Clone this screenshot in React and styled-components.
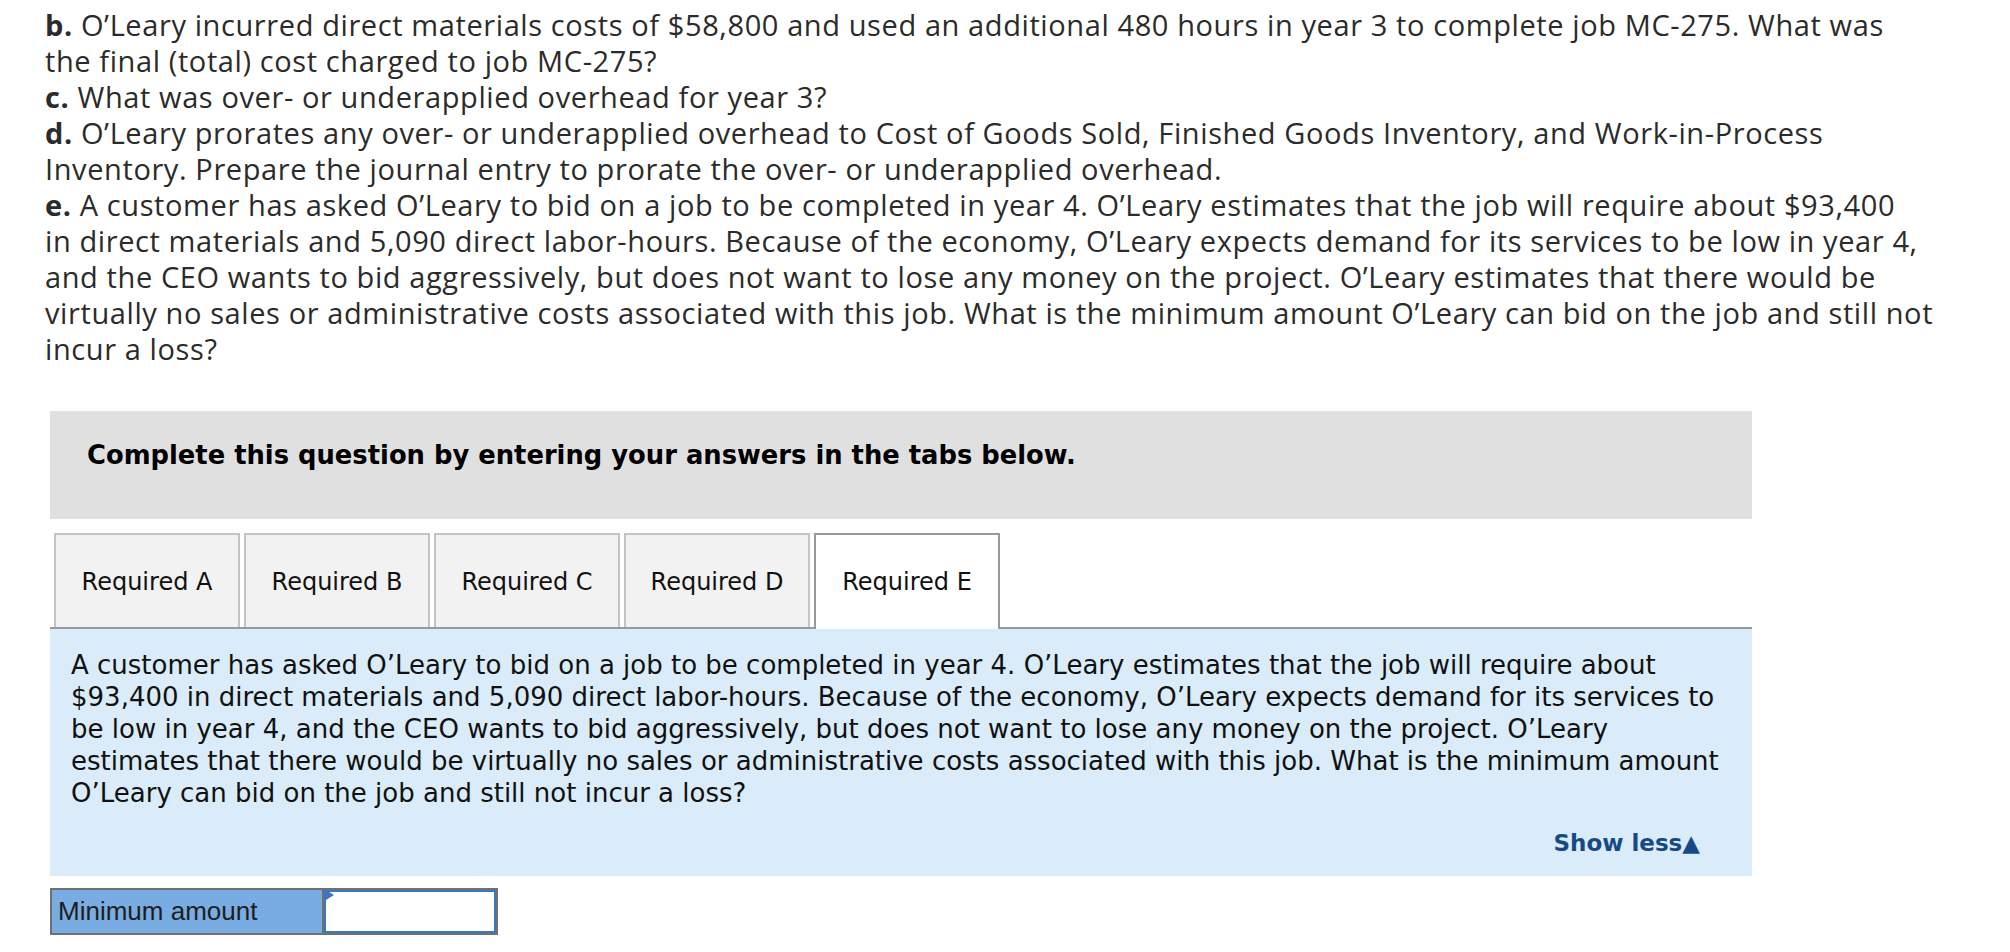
import React from 'react';
import styled, { createGlobalStyle } from 'styled-components';

const GlobalStyle = createGlobalStyle`
	html, body {
		margin: 0;
		padding: 0;
		background: #ffffff;
	}
`;

const Page = styled.div`
	padding: 7px 0 0 45px;
	width: 1965px;
	box-sizing: border-box;
`;

const Question = styled.div`
	font-family: 'Open Sans', Lato, 'Liberation Sans', sans-serif;
	font-size: 29px;
	letter-spacing: 0.6px;
	line-height: 36px;
	color: #2b2b2b;
	white-space: nowrap;
`;

const Part = styled.p`
	margin: 0;
`;

const Letter = styled.b`
	font-weight: 700;
`;

const Section = styled.div`
	margin: 44px 0 0 5px;
	width: 1702px;
`;

const Banner = styled.div`
	height: 108px;
	box-sizing: border-box;
	padding: 28px 0 0 37px;
	background: #e0e0e0;
	font-family: 'DejaVu Sans', Verdana, sans-serif;
	font-weight: 700;
	font-size: 25.8px;
	line-height: 32px;
	color: #000;
`;

const TabBar = styled.div`
	display: flex;
	gap: 4px;
	margin-top: 14px;
	padding-left: 4px;
	border-bottom: 2px solid #999999;
`;

const Tab = styled.div`
	width: 186px;
	box-sizing: border-box;
	display: flex;
	align-items: center;
	justify-content: center;
	border: 2px solid ${props => (props.active ? '#999999' : '#c4c4c4')};
	border-bottom: none;
	background: ${props => (props.active ? '#ffffff' : '#f2f2f2')};
	margin-bottom: ${props => (props.active ? '-2px' : '0')};
	height: ${props => (props.active ? '96px' : '94px')};
	padding-top: ${props => (props.active ? '0' : '2px')};
	font-family: 'DejaVu Sans', Verdana, sans-serif;
	font-size: 24px;
	color: #111;
`;

const Prompt = styled.div`
	background: #daecf9;
	padding: 20px 40px 17px 21px;
	font-family: 'DejaVu Sans', Verdana, sans-serif;
	font-size: 26px;
	line-height: 32px;
	color: #111;
`;

const PromptText = styled.p`
	margin: 0;
	white-space: nowrap;
`;

const ShowLess = styled.div`
	margin-top: 18px;
	padding-right: 12px;
	text-align: right;
	font-size: 23px;
	font-weight: 700;
	color: #154a87;
	cursor: pointer;
`;

const AnswerRow = styled.div`
	display: flex;
	margin-top: 12px;
	width: 448px;
	height: 47px;
	box-sizing: border-box;
	border: 2px solid #707070;
`;

const AnswerLabel = styled.div`
	width: 272px;
	display: flex;
	align-items: center;
	padding-left: 6px;
	box-sizing: border-box;
	background: #79ace2;
	border-right: 2px solid #707070;
	font-family: 'Liberation Sans', Arial, sans-serif;
	font-size: 26px;
	color: #1e1e1e;
`;

const AnswerField = styled.div`
	position: relative;
	flex: 1;
	border: 2px solid #3a78bb;
	background: #ffffff;
`;

const AnswerInput = styled.input`
	width: 100%;
	height: 100%;
	box-sizing: border-box;
	border: none;
	outline: none;
	background: transparent;
	font-family: 'Liberation Sans', Arial, sans-serif;
	font-size: 24px;
	padding: 0 8px;
`;

const Flag = styled.span`
	position: absolute;
	top: 0;
	left: 0;
	width: 0;
	height: 0;
	border-top: 5px solid transparent;
	border-bottom: 5px solid transparent;
	border-left: 8px solid #3a78bb;
	transform: translateY(-2px);
`;

const tabs = ['Required A', 'Required B', 'Required C', 'Required D', 'Required E'];

export default function App() {
	return (
		<>
			<GlobalStyle />
			<Page>
				<Question>
					<Part>
						<Letter>b.</Letter> O’Leary incurred direct materials costs of $58,800 and used an additional 480 hours in year 3 to complete job MC-275. What was
						<br />
						the final (total) cost charged to job MC-275?
					</Part>
					<Part>
						<Letter>c.</Letter> What was over- or underapplied overhead for year 3?
					</Part>
					<Part>
						<Letter>d.</Letter> O’Leary prorates any over- or underapplied overhead to Cost of Goods Sold, Finished Goods Inventory, and Work-in-Process
						<br />
						Inventory. Prepare the journal entry to prorate the over- or underapplied overhead.
					</Part>
					<Part>
						<Letter>e.</Letter> A customer has asked O’Leary to bid on a job to be completed in year 4. O’Leary estimates that the job will require about $93,400
						<br />
						in direct materials and 5,090 direct labor-hours. Because of the economy, O’Leary expects demand for its services to be low in year 4,
						<br />
						and the CEO wants to bid aggressively, but does not want to lose any money on the project. O’Leary estimates that there would be
						<br />
						virtually no sales or administrative costs associated with this job. What is the minimum amount O’Leary can bid on the job and still not
						<br />
						incur a loss?
					</Part>
				</Question>

				<Section>
					<Banner>Complete this question by entering your answers in the tabs below.</Banner>
					<TabBar>
						{tabs.map(label => (
							<Tab key={label} active={label === 'Required E'}>
								{label}
							</Tab>
						))}
					</TabBar>
					<Prompt>
						<PromptText>
							A customer has asked O’Leary to bid on a job to be completed in year 4. O’Leary estimates that the job will require about
							<br />
							$93,400 in direct materials and 5,090 direct labor-hours. Because of the economy, O’Leary expects demand for its services to
							<br />
							be low in year 4, and the CEO wants to bid aggressively, but does not want to lose any money on the project. O’Leary
							<br />
							estimates that there would be virtually no sales or administrative costs associated with this job. What is the minimum amount
							<br />
							O’Leary can bid on the job and still not incur a loss?
						</PromptText>
						<ShowLess>Show less▲</ShowLess>
					</Prompt>
					<AnswerRow>
						<AnswerLabel>Minimum amount</AnswerLabel>
						<AnswerField>
							<Flag />
							<AnswerInput type="text" aria-label="Minimum amount" />
						</AnswerField>
					</AnswerRow>
				</Section>
			</Page>
		</>
	);
}
